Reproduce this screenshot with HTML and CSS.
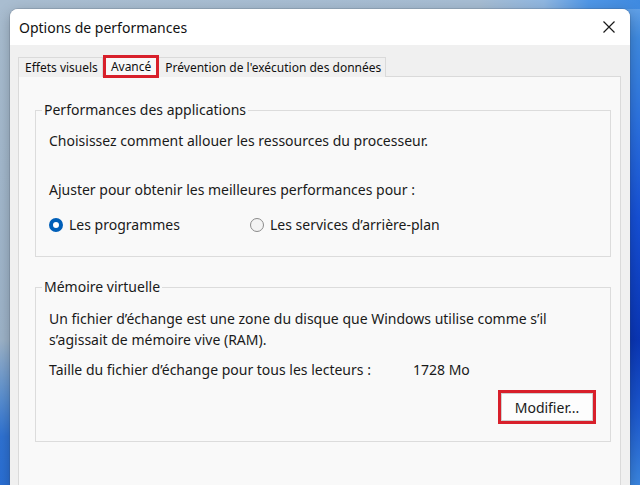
FILE: index.html
```html
<!DOCTYPE html>
<html lang="fr">
<head>
<meta charset="utf-8">
<title>Options de performances</title>
<link rel="stylesheet" href="styles.css">
</head>
<body>
<div class="desktop">
  <div class="window">
    <div class="titlebar">
      <span class="title">Options de performances</span>
      <span class="close" aria-label="Fermer">
        <svg width="12" height="12" viewBox="0 0 12 12"><path d="M0.5 0.5 L11.5 11.5 M11.5 0.5 L0.5 11.5" stroke="#1a1a1a" stroke-width="1.2" fill="none"/></svg>
      </span>
    </div>
    <div class="body">
      <div class="tabs">
        <div class="tab">Effets visuels</div>
        <div class="tab active">Avancé</div>
        <div class="tab">Prévention de l'exécution des données</div>
      </div>
      <div class="panel">
        <fieldset class="group group-perf">
          <legend>Performances des applications</legend>
          <p class="line">Choisissez comment allouer les ressources du processeur.</p>
          <p class="line gap-lg">Ajuster pour obtenir les meilleures performances pour :</p>
          <div class="radios">
            <label class="radio"><span class="dot checked"></span>Les programmes</label>
            <label class="radio"><span class="dot"></span>Les services d’arrière-plan</label>
          </div>
        </fieldset>
        <fieldset class="group group-mem">
          <legend>Mémoire virtuelle</legend>
          <p class="line">Un fichier d’échange est une zone du disque que Windows utilise comme s’il<br>s’agissait de mémoire vive (RAM).</p>
          <p class="line size-row"><span class="size-label">Taille du fichier d’échange pour tous les lecteurs :</span><span class="size-value">1728 Mo</span></p>
          <div class="actions">
            <button class="btn">Modifier...</button>
          </div>
        </fieldset>
      </div>
    </div>
  </div>
</div>
</body>
</html>
```
FILE: styles.css
```css
html, body {
  margin: 0;
  padding: 0;
  width: 640px;
  height: 485px;
  overflow: hidden;
}
.desktop {
  width: 640px;
  height: 485px;
  overflow: hidden;
  padding: 9px 0 0 10px;
  box-sizing: border-box;
  background:
    linear-gradient(90deg, #a9bdd0 0%, #a6bcd2 75%, #8fb6e0 85%, #4f96e6 92%, #3f8ae0 100%) left top / 640px 9px no-repeat,
    linear-gradient(180deg, #a9bdd0 0%, #9db3c8 70%, #5a8fd0 82%, #2f72d2 90%, #2a6fd4 100%) left top / 320px 100% no-repeat,
    linear-gradient(180deg, #6aa6e8 0%, #3f8ae0 8%, #2c72e0 25%, #1650d6 45%, #0a36b6 70%, #1c58cf 85%, #3b86e0 100%) right top / 320px 100% no-repeat;
  font-family: "Noto Sans", "Open Sans", sans-serif;
  color: #1a1a1a;
}
.window {
  width: 620px;
  height: 480px;
  background: #f0f0f0;
  border-radius: 8px 8px 0 0;
  box-shadow: 0 0 0 1px rgba(60,70,90,0.18), 0 4px 14px rgba(0,0,0,0.25);
  overflow: hidden;
}
.titlebar {
  height: 36px;
  background: #ffffff;
  display: flex;
  align-items: center;
  justify-content: space-between;
  padding: 0 15px 0 9px;
}
.title {
  font-size: 14px;
  color: #111;
  padding-top: 1px;
}
.close {
  display: flex;
  width: 12px;
  height: 12px;
}
.body {
  padding: 10px 9px 0 8px;
}
.tabs {
  display: flex;
  align-items: flex-end;
  height: 22px;
  position: relative;
  z-index: 1;
  margin-bottom: -1px;
}
.tab {
  height: 20px;
  box-sizing: border-box;
  border: 1px solid #dadada;
  border-bottom: none;
  background: #f0f0f0;
  font-size: 12px;
  line-height: 19px;
  padding: 0 4px 0 6px;
  color: #111;
  white-space: nowrap;
}
.tab + .tab {
  border-left: none;
}
.tab.active {
  height: 23px;
  background: #f9f9f9;
  border: 3px solid #d8202b;
  line-height: 17px;
  padding: 0 5px 0 5px;
  margin-bottom: -1px;
}
.panel {
  background: #f9f9f9;
  border: 1px solid #dadada;
  height: 420px;
  padding: 23px 9px 0 16px;
}
.group {
  margin: 0;
  border: 1px solid #dcdcdc;
  padding: 11px 13px 21px 13px;
  min-width: 0;
}
.group legend {
  font-size: 14px;
  line-height: 20px;
  padding: 0 2px;
  margin-left: -7px;
}
.line {
  margin: 0;
  font-size: 14px;
  line-height: 20px;
}
.gap-lg {
  margin-top: 29px;
}
.radios {
  display: flex;
  margin-top: 15px;
  font-size: 14px;
  line-height: 20px;
}
.radio {
  display: flex;
  align-items: center;
  gap: 6px;
  width: 201px;
}
.dot {
  width: 14px;
  height: 14px;
  box-sizing: border-box;
  border-radius: 50%;
  border: 1px solid #8a8a8a;
  background: #f3f3f3;
}
.dot.checked {
  border: 4px solid #005fb8;
  background: #ffffff;
}
.group-mem {
  margin-top: 20px;
  padding-bottom: 20px;
}
.group-mem .line {
  line-height: 21px;
}
.size-row {
  margin-top: 9px;
  display: flex;
}
.size-label {
  width: 364px;
}
.actions {
  display: flex;
  justify-content: flex-end;
  margin-top: 13px;
  padding-right: 4px;
}
.btn {
  width: 92px;
  height: 28px;
  box-sizing: border-box;
  border: 1px solid #d0d0d0;
  background: #fdfdfd;
  outline: 3px solid #d8202b;
  font-family: inherit;
  font-size: 14px;
  color: #1a1a1a;
  padding: 0;
  border-radius: 0;
}
```
